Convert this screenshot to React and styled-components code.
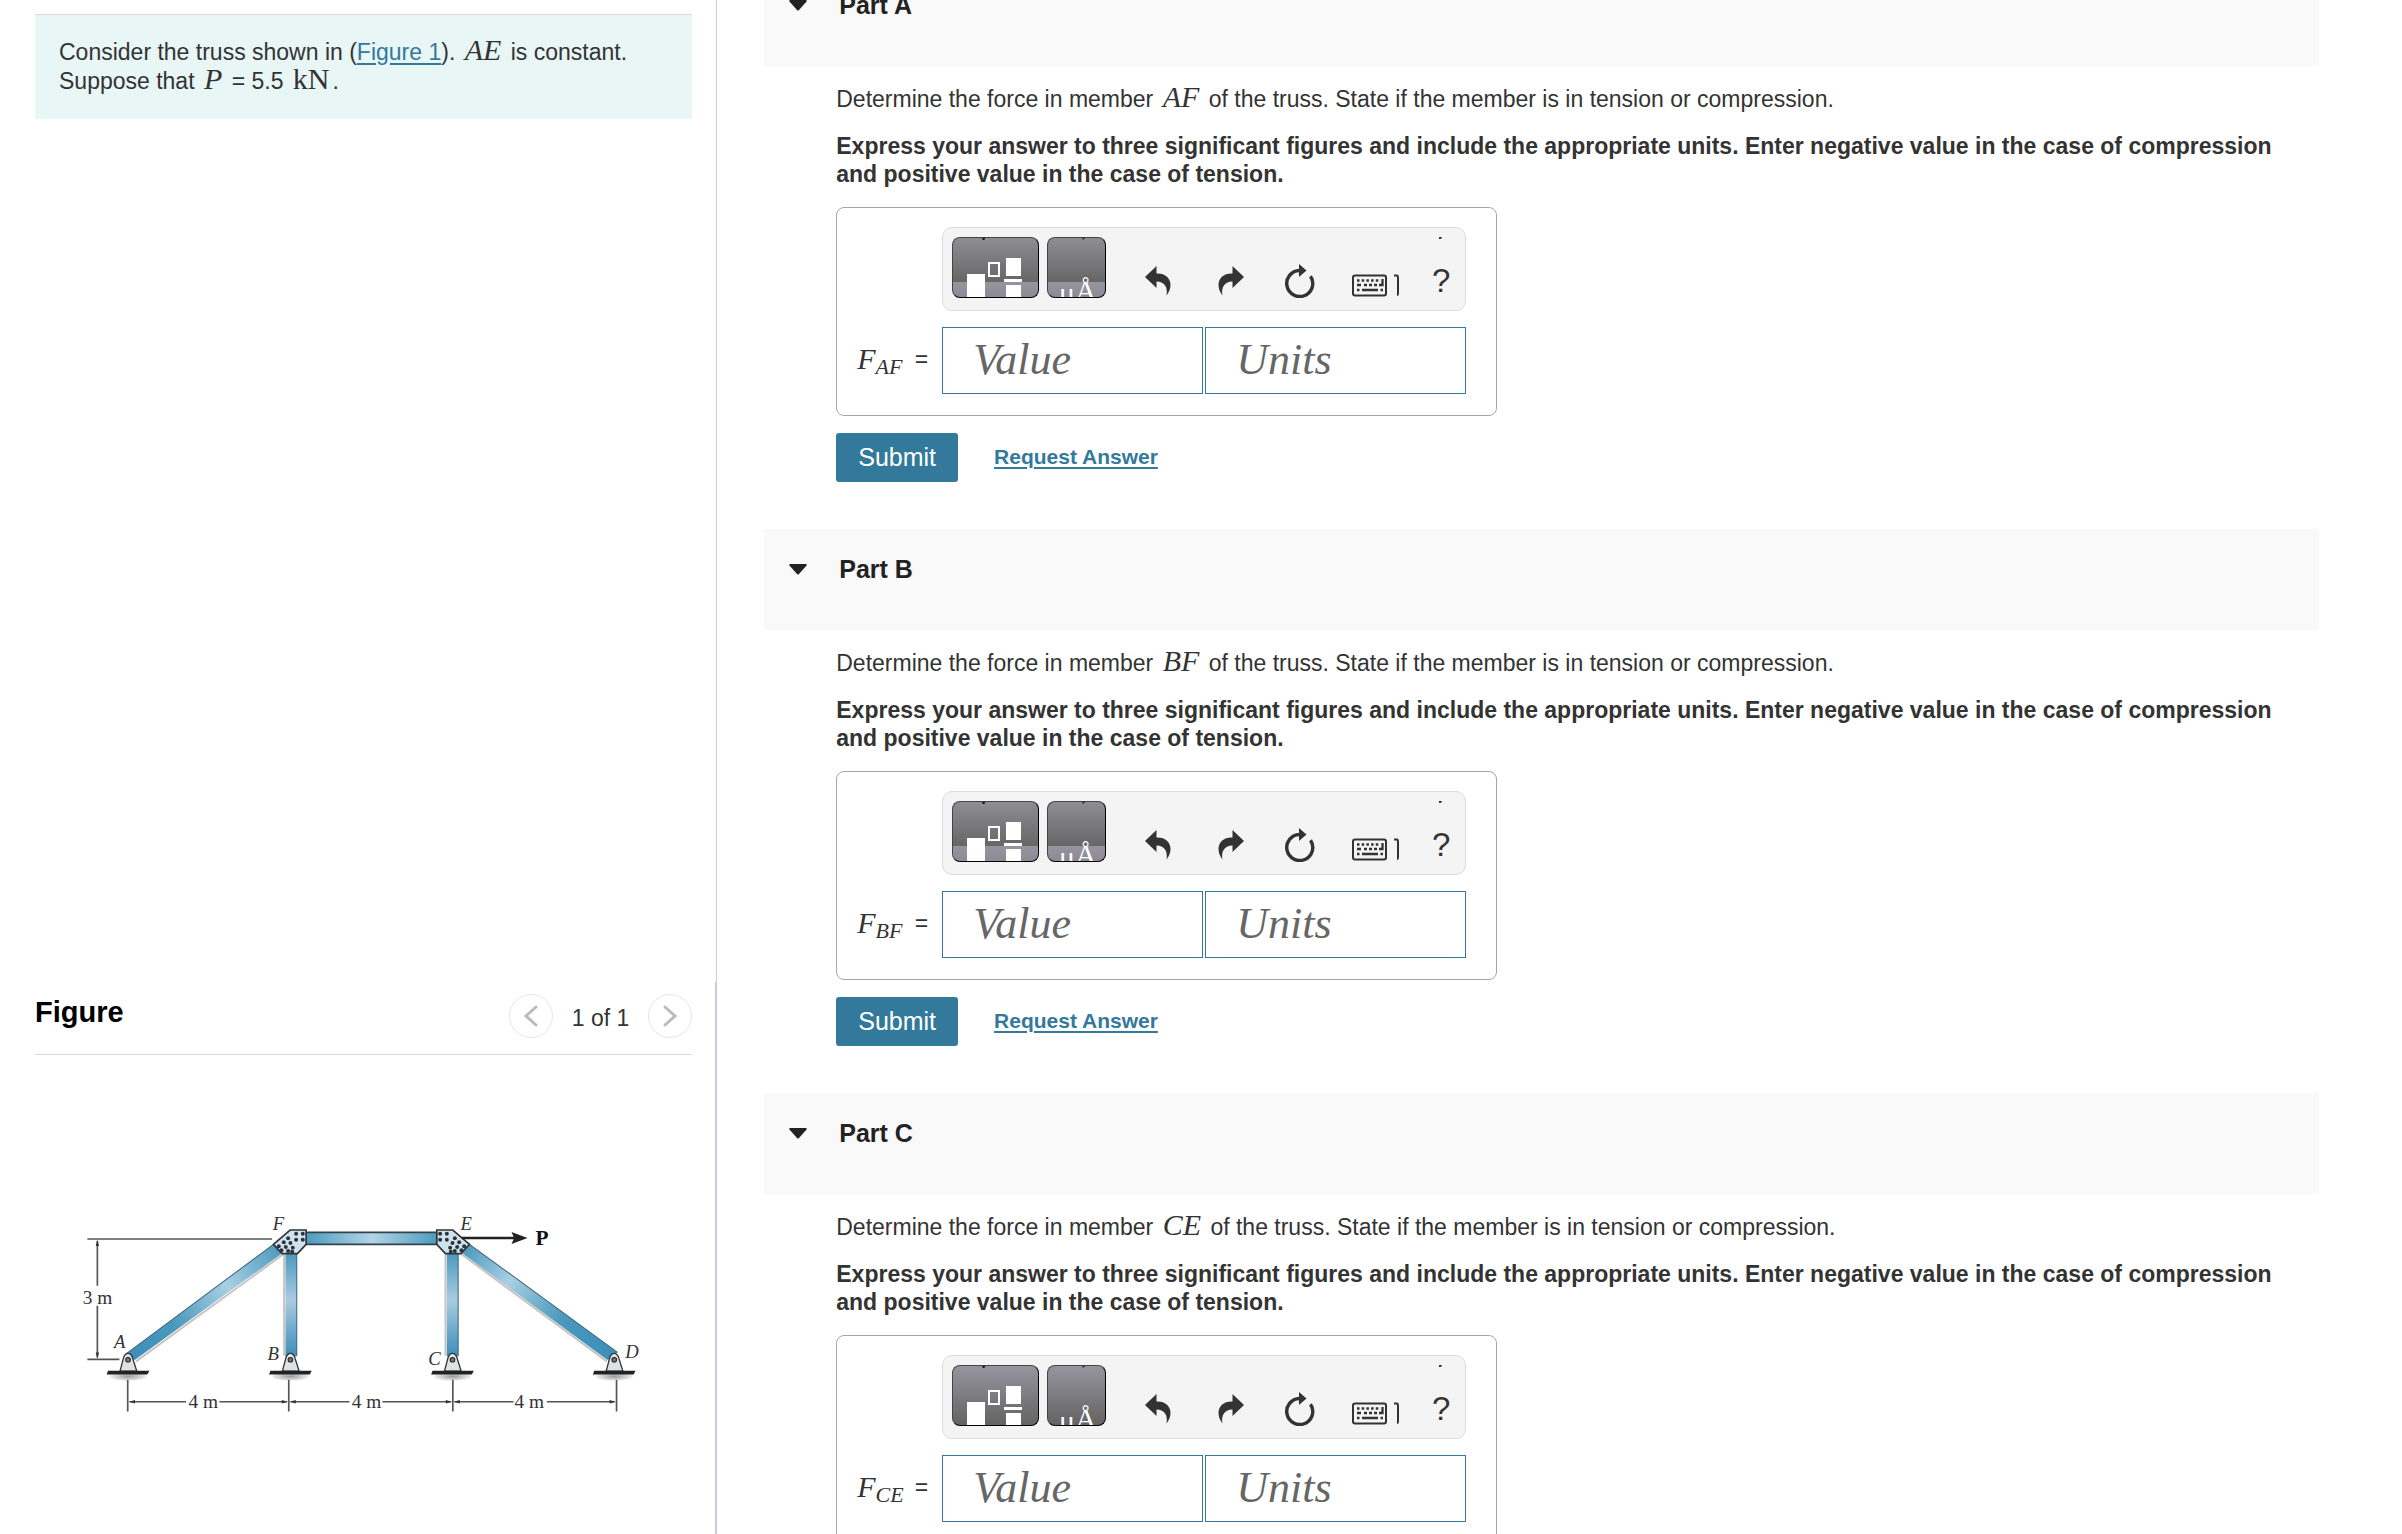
import React, { useState } from "react";
import styled, { createGlobalStyle } from "styled-components";

const GlobalStyle = createGlobalStyle`
  * {
    box-sizing: border-box;
  }
  body {
    margin: 0;
    background: #fff;
    color: #333;
    font-family: "Liberation Sans", Arial, sans-serif;
    font-size: 23px;
    line-height: 28px;
  }
  button, input {
    font-family: inherit;
  }
`;

const Page = styled.div`
  display: grid;
  grid-template-columns: minmax(0, 43fr) minmax(0, 101fr);
  height: 100vh;
`;
const Side = styled.aside`
  display: flex;
  flex-direction: column;
  border-right: 1px solid #c3cede;
`;
const Problem = styled.section`
  flex: 1;
  padding: 14px 24px 0 35px;
`;
const Intro = styled.p`
  margin: 0;
  padding: 23px 24px;
  border-top: 1px solid #dcdcdc;
  background: #e8f6f6;
  line-height: 29px;
`;
const Link = styled.a`
  color: #32799b;
  text-decoration: underline;
  text-underline-offset: 3px;
`;
const Math = styled.i`
  font-family: "Liberation Serif", "Times New Roman", serif;
  font-size: 30px;
  font-style: ${({ $upright }) => ($upright ? "normal" : "italic")};
  line-height: 0;
  padding: 0 3px;
`;

const FigurePane = styled.section`
  padding: 12px 23px 115px 35px;
  border-right: 1px solid #c3cede;
`;
const FigureHead = styled.div`
  display: flex;
  align-items: center;
  justify-content: space-between;
  padding-bottom: 16px;
  border-bottom: 1px solid #d8dadb;
`;
const FigureTitle = styled.h2`
  margin: 0;
  padding-bottom: 8px;
  color: #000;
  font-size: 29px;
  line-height: 36px;
`;
const Pager = styled.div`
  display: flex;
  align-items: center;
  gap: 19px;
`;
const PagerButton = styled.button`
  display: flex;
  align-items: center;
  justify-content: center;
  width: 44px;
  height: 44px;
  padding: 0;
  border: 1px solid #e6e6e6;
  border-radius: 50%;
  background: #fff;
`;
const PagerText = styled.span`
  padding-top: 4px;
`;
const Truss = styled.svg`
  display: block;
  width: 100%;
  height: auto;
  margin-top: 134px;
  font-family: "Liberation Serif", "Times New Roman", serif;
`;

const Main = styled.main`
  padding: 0 83px 0 47px;
  overflow: auto;
  scrollbar-width: none;
`;
// the question list rests slightly scrolled, so its first header is cut off
const Parts = styled.div`
  margin-top: -35px;
`;
const PartHead = styled.h2`
  margin: 0;
  padding: 26px 25px 47px;
  background: #f9f9f9;
  font-size: 25px;
  line-height: 28px;
`;
const Toggle = styled.button`
  display: flex;
  align-items: center;
  gap: 32px;
  padding: 0;
  border: 0;
  background: none;
  color: #222;
  font-size: 25px;
  font-weight: 700;
  line-height: 28px;
  cursor: pointer;
`;
const PartBody = styled.div`
  padding: 19px 20px 47px 72px;
`;
const Text = styled.p`
  margin: 0 0 19px;
  font-weight: ${({ $bold }) => ($bold ? 700 : 400)};
`;
const AnswerBox = styled.div`
  display: grid;
  grid-template-columns: 85px 1fr;
  row-gap: 16px;
  max-width: 661px;
  padding: 19px 30px 21px 20px;
  border: 1px solid #a6a6a6;
  border-radius: 8px;
`;
const Toolbar = styled.div`
  grid-column: 2;
  display: flex;
  padding: 9px 2px 12px 9px;
  border: 1px solid #dcdcdc;
  border-radius: 10px;
  background: #f4f4f4;
`;
const Template = styled.button`
  width: ${({ $width }) => $width}px;
  height: 61px;
  margin-right: 8px;
  padding: 0;
  overflow: hidden;
  border: 1px solid;
  border-color: #444 #000 #000 #444;
  border-radius: 8px;
  background: ${({ $plain }) =>
    $plain
      ? "linear-gradient(#96959f, #636363)"
      : "linear-gradient(#8e8d93, #666 75%, #96959f 75%, #8c8b95)"};

  svg {
    display: block;
  }
`;
const Tools = styled.div`
  display: flex;
  margin-left: 7px;
`;
const Tool = styled.button`
  display: flex;
  align-items: flex-end;
  justify-content: center;
  width: ${({ $width }) => $width}px;
  height: 61px;
  padding: 0;
  border: 0;
  background: none;
  color: #333;
`;
const Label = styled.label`
  display: flex;
  align-items: center;
  justify-content: space-between;
  padding: 0 14px 3px 0;
`;
const Symbol = styled.i`
  font-family: "Liberation Serif", "Times New Roman", serif;
  font-size: 30px;

  sub {
    font-size: 22px;
    line-height: 0;
    vertical-align: -5px;
  }
`;
const Fields = styled.div`
  display: grid;
  grid-template-columns: 1fr 1fr;
  gap: 2px;
`;
const Field = styled.input`
  width: 100%;
  height: 67px;
  padding: 0 30px 3px;
  border: 1px solid #32799b;
  background: #fff;
  font-family: "Liberation Serif", "Times New Roman", serif;
  font-size: 44px;
  font-style: italic;

  &::placeholder {
    color: #666;
    opacity: 1;
  }
`;
const Actions = styled.div`
  display: flex;
  align-items: center;
  gap: 36px;
  margin-top: 17px;
`;
const Submit = styled.button`
  height: 49px;
  padding: 0 22px;
  border: 0;
  border-radius: 3px;
  background: #32799b;
  color: #fff;
  font-size: 25px;
`;
const Request = styled(Link)`
  padding-bottom: 2px;
  font-size: 21px;
  font-weight: 700;
`;

const TemplateIcon = () => (
  <svg width="85" height="60" viewBox="1 1 85 60" fill="#fff">
    <path d="M30 1h3v1l-1 1h-1z" fill="#111" />
    <path d="M15 37h18v24H15zM54 21h15v18H54zM52 42h18v3H52zM54 48h15v13H54z" />
    <path d="M37 26h10v13H37z" fill="none" stroke="#fff" strokeWidth="2" />
  </svg>
);

const SymbolsIcon = () => (
  <svg width="57" height="60" viewBox="1 1 57 60" fill="#fff">
    <path d="M35 3l1-2h2l-1 1z" fill="#111" />
    <g fontFamily="Liberation Serif, serif" fontSize="30">
      <text x="12" y="66">μ</text>
      <text x="28" y="64">Å</text>
    </g>
  </svg>
);

const UndoIcon = ({ flip }) => (
  <svg width="26" height="32" viewBox="0 0 26 32" fill="currentColor">
    <path
      transform={flip ? "matrix(-1 0 0 1 26 0)" : undefined}
      d="M0 11L11.500 0V7.500C20 7 25.500 12 25.500 19C25.500 23 24 26 21.500 29.500C23 22 20 15.500 11.500 15.500V22z"
    />
  </svg>
);

const ResetIcon = () => (
  <svg width="30" height="35" viewBox="0 0 30 35">
    <path d="M14.500 7.500A13 13 0 1 0 25.500 13.200" fill="none" stroke="currentColor" strokeWidth="3.400" />
    <path d="M14 1L21.500 7.500L14 14z" fill="currentColor" />
  </svg>
);

const KeyboardIcon = () => (
  <svg width="48" height="24" viewBox="0 0 48 24" fill="none" stroke="currentColor">
    <rect x="1" y="1.500" width="33" height="20" rx="2" strokeWidth="2" />
    <path d="M5 6.500h23" strokeWidth="2.500" strokeDasharray="2.500 2.200" />
    <path d="M5 11h4M12 11h3M17 11h3M22 11h3M30.500 5v6H27" strokeWidth="2.300" />
    <path d="M5 16h2.500M10 16h16M28.500 16H31" strokeWidth="2.500" />
    <path d="M42 1.500h3q1 .5 1 2V19q0 2-1 2" strokeWidth="2" />
  </svg>
);

const HelpIcon = () => (
  <svg width="20" height="61" viewBox="0 0 20 61" fill="currentColor">
    <path d="M8 0h3l-1 2H8z" />
    <text x="1" y="55" fontSize="33" fontFamily="Liberation Sans, sans-serif">?</text>
  </svg>
);

const Chevron = ({ next }) => (
  <svg width="14" height="22" viewBox="0 0 14 22" fill="none" stroke="#bbb" strokeWidth="3" strokeLinecap="round">
    <path d={next ? "M2 2L12 11L2 20" : "M12 2L2 11L12 20"} />
  </svg>
);

const Support = ({ x }) => (
  <g transform={`translate(${x} 0)`}>
    <ellipse cx="0" cy="562" rx="55" ry="13" fill="url(#ground)" />
    <path d="M-24 546L-14 508Q-10 493 0 493Q10 493 14 508L26 546z" fill="#dfe2e4" stroke="#333" strokeWidth="4" />
    <circle cx="0" cy="512" r="7" fill="#777" stroke="#222" strokeWidth="3" />
    <path d="M-60 545H64L58 556H-64z" fill="#222" />
  </g>
);

const rivets = [
  [708, 134], [728, 134], [708, 152], [728, 152],
  [684, 148], [671, 160], [656, 172], [664, 184],
  [677, 174], [691, 162], [684, 186], [698, 176], [696, 188],
];

const Gusset = ({ flip }) => (
  <g transform={flip ? "matrix(-1 0 0 1 1868 0)" : undefined}>
    <path d="M640 166L690 123H738V166L712 194H666z" fill="#cfe3ef" stroke="#333" strokeWidth="5" />
    {rivets.map(([x, y]) => (
      <circle key={`${x}-${y}`} cx={x} cy={y} r="6" fill="#2d3338" />
    ))}
  </g>
);

const TrussFigure = () => (
  <Truss viewBox="-75 0 1971 690" role="img" aria-label="Truss with load P at joint E">
    <defs>
      <linearGradient id="rise" gradientUnits="userSpaceOnUse" x1="210" y1="505" x2="655" y2="175">
        <stop offset="0" stopColor="#3b8fb8" />
        <stop offset="0.300" stopColor="#4a99be" />
        <stop offset="0.650" stopColor="#a9cfe2" />
        <stop offset="1" stopColor="#4d9bc0" />
      </linearGradient>
      <linearGradient id="fall" gradientUnits="userSpaceOnUse" x1="1215" y1="175" x2="1660" y2="505">
        <stop offset="0" stopColor="#4d9bc0" />
        <stop offset="0.300" stopColor="#a9cfe2" />
        <stop offset="0.650" stopColor="#4a99be" />
        <stop offset="1" stopColor="#3b8fb8" />
      </linearGradient>
      <linearGradient id="beam">
        <stop offset="0" stopColor="#4d9bc0" />
        <stop offset="0.500" stopColor="#b3d4e5" />
        <stop offset="1" stopColor="#4d9bc0" />
      </linearGradient>
      <linearGradient id="post" x2="0" y2="1">
        <stop offset="0" stopColor="#4d9bc0" />
        <stop offset="0.450" stopColor="#a9cbe1" />
        <stop offset="1" stopColor="#3b8fb8" />
      </linearGradient>
      <radialGradient id="ground">
        <stop offset="0" stopColor="#9a9a9a" />
        <stop offset="1" stopColor="#eee" />
      </radialGradient>
    </defs>

    <g stroke="#c9c2c0" strokeWidth="6">
      <path d="M228 517L672 194M1202 194L1640 517M672 195V500M1156 195V500" />
    </g>
    <path d="M195 497L640 166L668 192L224 513z" fill="url(#rise)" />
    <path d="M1672 490L1228 166L1202 190L1642 513z" fill="url(#fall)" />
    <path d="M738 130H1130V165H738z" fill="url(#beam)" />
    <path d="M676 194H710V502H676zM1160 194H1194V502H1160z" fill="url(#post)" />
    <g stroke="#3c6478" strokeWidth="3">
      <path d="M195 497L640 166M1672 490L1228 166M710 194V500M1194 194V500" />
    </g>
    <path d="M738 130H1130M738 166H1130" stroke="#33434c" strokeWidth="5" />
    <Gusset />
    <Gusset flip />
    <Support x={204} />
    <Support x={691} />
    <Support x={1177} />
    <Support x={1662} />

    <g stroke="#555" strokeWidth="5" fill="none">
      <path d="M82 150H636M82 511H178M112 155V290M112 350V505" />
      <path d="M203 572V667M686 572V667M1178 572V667M1669 572V667" />
      <path d="M208 638H378M478 638H681M691 638H868M967 638H1173M1183 638H1360M1460 638H1664" />
    </g>
    <g fill="#333">
      <path d="M112 153l5 18h-10zM112 508l5-18h-10z" />
      <path d="M207 638l18-5v10zM683 638l-18-5v10zM689 638l18-5v10zM1175 638l-18-5v10zM1181 638l18-5v10zM1666 638l-18-5v10z" />
    </g>
    <path d="M1205 147H1365" stroke="#222" strokeWidth="8" />
    <path d="M1402 147L1354 129L1362 147L1354 165z" fill="#222" />

    <g fill="#333" fontSize="58">
      <text x="68" y="344">3 m</text>
      <text x="385" y="656">4 m</text>
      <text x="875" y="656">4 m</text>
      <text x="1363" y="656">4 m</text>
    </g>
    <g fill="#333" fontSize="56" fontStyle="italic">
      <text x="162" y="476">A</text>
      <text x="622" y="514">B</text>
      <text x="1104" y="528">C</text>
      <text x="1695" y="508">D</text>
      <text x="1201" y="122">E</text>
      <text x="638" y="124">F</text>
    </g>
    <text x="1426" y="167" fill="#111" fontSize="64" fontWeight="700">P</text>
  </Truss>
);

const Part = ({ name, member, plain }) => {
  const [open, setOpen] = useState(true);
  const id = `force-${member}`;
  return (
    <section>
      <PartHead>
        <Toggle aria-expanded={open} onClick={() => setOpen(!open)}>
          <svg width="18" height="11" viewBox="0 0 18 11">
            <path d="M1 0H17L18 1L10 10Q9 11 8 10L0 1z" fill="#222" />
          </svg>
          {name}
        </Toggle>
      </PartHead>
      {open && (
        <PartBody>
          <Text>
            Determine the force in member <Math>{member}</Math> of the truss. State if the member is
            in tension or compression.
          </Text>
          <Text $bold>
            Express your answer to three significant figures and include the appropriate units. Enter
            negative value in the case of compression and positive value in the case of tension.
          </Text>
          <AnswerBox>
            <Toolbar>
              <Template $width={87} $plain={plain} aria-label="Templates">
                <TemplateIcon />
              </Template>
              <Template $width={59} $plain={plain} aria-label="Symbols">
                <SymbolsIcon />
              </Template>
              <Tools>
                <Tool $width={74} aria-label="Undo">
                  <UndoIcon />
                </Tool>
                <Tool $width={72} aria-label="Redo">
                  <UndoIcon flip />
                </Tool>
                <Tool $width={66} aria-label="Reset">
                  <ResetIcon />
                </Tool>
                <Tool $width={86} aria-label="Keyboard shortcuts">
                  <KeyboardIcon />
                </Tool>
                <Tool $width={44} aria-label="Help">
                  <HelpIcon />
                </Tool>
              </Tools>
            </Toolbar>
            <Label htmlFor={id}>
              <Symbol>
                F<sub>{member}</sub>
              </Symbol>
              =
            </Label>
            <Fields>
              <Field id={id} placeholder="Value" />
              <Field aria-label={`Units of ${member}`} placeholder="Units" />
            </Fields>
          </AnswerBox>
          <Actions>
            <Submit>Submit</Submit>
            <Request href="#answer">Request Answer</Request>
          </Actions>
        </PartBody>
      )}
    </section>
  );
};

const App = () => {
  return (
    <>
      <GlobalStyle />
      <Page>
        <Side>
          <Problem>
            <Intro>
              Consider the truss shown in (<Link href="#figure">Figure 1</Link>). <Math>AE</Math> is
              constant.
              <br />
              Suppose that <Math>P</Math> = 5.5 <Math $upright>kN</Math>.
            </Intro>
          </Problem>
          <FigurePane id="figure">
            <FigureHead>
              <FigureTitle>Figure</FigureTitle>
              <Pager>
                <PagerButton aria-label="Previous figure">
                  <Chevron />
                </PagerButton>
                <PagerText>1 of 1</PagerText>
                <PagerButton aria-label="Next figure">
                  <Chevron next />
                </PagerButton>
              </Pager>
            </FigureHead>
            <TrussFigure />
          </FigurePane>
        </Side>
        <Main>
          <Parts>
            <Part name="Part A" member="AF" />
            <Part name="Part B" member="BF" />
            <Part name="Part C" member="CE" plain />
          </Parts>
        </Main>
      </Page>
    </>
  );
};

export default App;
